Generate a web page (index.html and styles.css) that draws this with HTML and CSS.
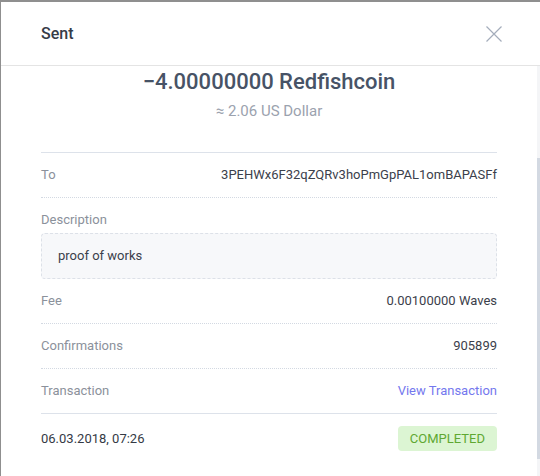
FILE: index.html
```html
<!DOCTYPE html>
<html>
<head>
<meta charset="utf-8">
<link rel="stylesheet" href="styles.css">
</head>
<body>
<div class="modal">
  <div class="header">
    <div class="title">Sent</div>
    <svg class="close" width="16" height="16" viewBox="0 0 16 16"><path d="M0.5 0.5 L15.5 15.5 M15.5 0.5 L0.5 15.5" stroke="#a4adbb" stroke-width="1.2" fill="none"/></svg>
  </div>
  <div class="body">
    <div class="content">
      <div class="summary">
        <div class="amount">−4.00000000 Redfishcoin</div>
        <div class="fiat">≈ 2.06 US Dollar</div>
      </div>
      <div class="row">
        <span class="label">To</span>
        <span class="value">3PEHWx6F32qZQRv3hoPmGpPAL1omBAPASFf</span>
      </div>
      <div class="desc">
        <div class="label">Description</div>
        <div class="desc-box">proof of works</div>
      </div>
      <div class="row">
        <span class="label">Fee</span>
        <span class="value">0.00100000 Waves</span>
      </div>
      <div class="row">
        <span class="label">Confirmations</span>
        <span class="value">905899</span>
      </div>
      <div class="row last">
        <span class="label">Transaction</span>
        <span class="link">View Transaction</span>
      </div>
      <div class="footer">
        <span class="date">06.03.2018, 07:26</span>
        <span class="badge">COMPLETED</span>
      </div>
    </div>
    <div class="scrollbar"><div class="thumb"></div></div>
  </div>
</div>
</body>
</html>
```
FILE: styles.css
```css
* { box-sizing: border-box; }
html, body { margin: 0; padding: 0; }
body {
  background: #8f8f8f;
  font-family: Roboto, "Liberation Sans", sans-serif;
  overflow: hidden;
}
.modal {
  margin: 2px 0 0 1px;
  background: #fff;
  height: 474px;
  display: flex;
  flex-direction: column;
}
.header {
  height: 64px;
  flex: none;
  border-bottom: 1px solid #e4e4e4;
  display: flex;
  align-items: center;
  justify-content: space-between;
  padding: 0 38px 0 40px;
}
.title {
  font-size: 16px;
  font-weight: 500;
  color: #363c47;
}
.close { display: block; }
.body {
  flex: 1;
  display: flex;
  min-height: 0;
}
.content {
  flex: 1;
  padding: 0 40px;
  font-size: 13px;
  line-height: 16px;
}
.scrollbar {
  width: 3px;
  flex: none;
  background: #f4f5f7;
}
.thumb {
  margin-top: 92px;
  height: 301px;
  background: #d3d9e2;
}
.summary {
  text-align: center;
  padding-top: 2px;
  padding-bottom: 31px;
  border-bottom: 1px solid #dde2ea;
}
.amount {
  font-size: 22px;
  line-height: 28px;
  font-weight: 500;
  color: #475366;
}
.fiat {
  margin-top: 5px;
  font-size: 15px;
  line-height: 20px;
  color: #9ba2ae;
}
.row {
  display: flex;
  justify-content: space-between;
  padding: 14px 0;
  border-bottom: 1px dotted #d3d9e2;
}
.row.last { border-bottom: 1px solid #dde2ea; }
.label { color: #8b919b; }
.value { color: #3b404b; }
.link { color: #7478ee; }
.desc { padding-top: 14px; }
.desc-box {
  margin-top: 5px;
  padding: 14px 16px;
  background: #f7f8fa;
  border: 1px dashed #dde1e8;
  border-radius: 4px;
  color: #3b404b;
}
.footer {
  display: flex;
  justify-content: space-between;
  align-items: center;
  padding-top: 12px;
}
.date { color: #343a45; }
.badge {
  background: #dcf5d3;
  color: #5fa832;
  border-radius: 4px;
  height: 25px;
  line-height: 25px;
  padding: 0 12px;
}
```
